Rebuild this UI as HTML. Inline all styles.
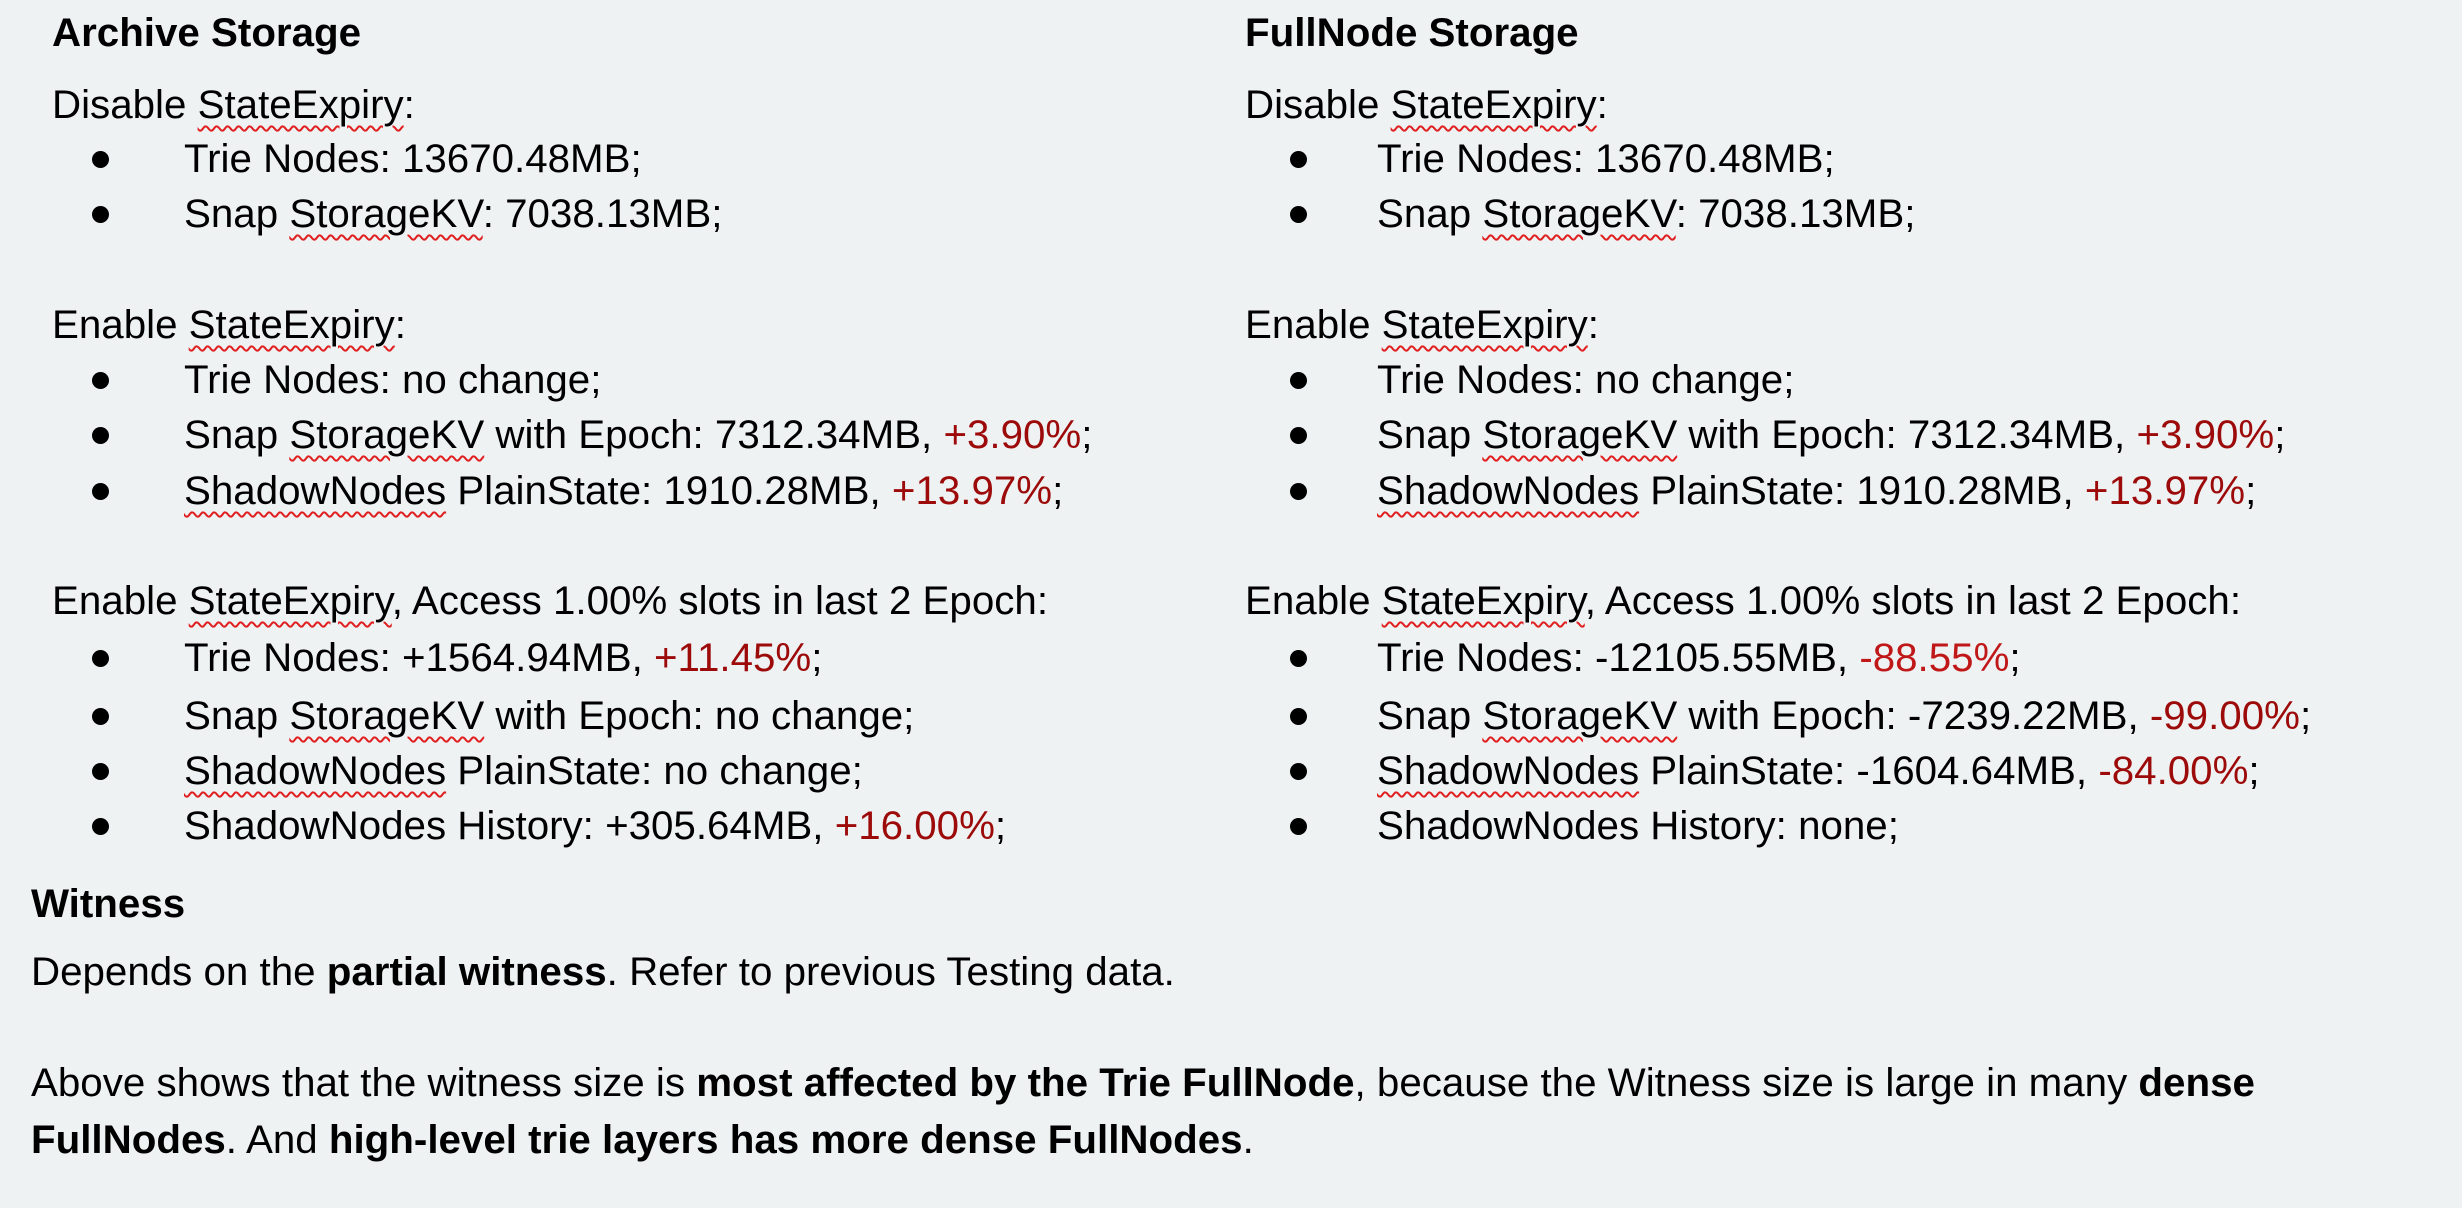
<!DOCTYPE html>
<html><head><meta charset="utf-8"><style>
html,body{margin:0;padding:0}
body{width:2462px;height:1208px;overflow:hidden;position:relative;background:#eff2f3;font-family:"Liberation Sans",Arial,sans-serif;color:#000;font-size:40.3px}
.t{position:absolute;white-space:nowrap;line-height:40px}
.b{font-weight:bold}
.r{color:#9c0a0a}
.s{text-decoration:underline wavy #e02020;text-decoration-thickness:1.5px;text-underline-offset:7px}
.d{position:absolute;width:17px;height:17px;border-radius:50%;background:#000}
</style></head><body>
<div class="t b" style="left:52px;top:13px">Archive Storage</div>
<div class="t" style="left:52px;top:85px">Disable <span class="s">StateExpiry</span>:</div>
<div class="d" style="left:92px;top:151px"></div><div class="t" style="left:184px;top:139px">Trie Nodes: 13670.48MB;</div>
<div class="d" style="left:92px;top:206px"></div><div class="t" style="left:184px;top:194px">Snap <span class="s">StorageKV</span>: 7038.13MB;</div>
<div class="t" style="left:52px;top:305px">Enable <span class="s">StateExpiry</span>:</div>
<div class="d" style="left:92px;top:372px"></div><div class="t" style="left:184px;top:360px">Trie Nodes: no change;</div>
<div class="d" style="left:92px;top:427px"></div><div class="t" style="left:184px;top:415px">Snap <span class="s">StorageKV</span> with Epoch: 7312.34MB, <span class="r">+3.90%</span>;</div>
<div class="d" style="left:92px;top:483px"></div><div class="t" style="left:184px;top:471px"><span class="s">ShadowNodes</span> PlainState: 1910.28MB, <span class="r">+13.97%</span>;</div>
<div class="t" style="left:52px;top:581px">Enable <span class="s">StateExpiry</span>, Access 1.00% slots in last 2 Epoch:</div>
<div class="d" style="left:92px;top:650px"></div><div class="t" style="left:184px;top:638px">Trie Nodes: +1564.94MB, <span class="r">+11.45%</span>;</div>
<div class="d" style="left:92px;top:708px"></div><div class="t" style="left:184px;top:696px">Snap <span class="s">StorageKV</span> with Epoch: no change;</div>
<div class="d" style="left:92px;top:763px"></div><div class="t" style="left:184px;top:751px"><span class="s">ShadowNodes</span> PlainState: no change;</div>
<div class="d" style="left:92px;top:818px"></div><div class="t" style="left:184px;top:806px">ShadowNodes History: +305.64MB, <span class="r">+16.00%</span>;</div>

<div class="t b" style="left:1245px;top:13px">FullNode Storage</div>
<div class="t" style="left:1245px;top:85px">Disable <span class="s">StateExpiry</span>:</div>
<div class="d" style="left:1290px;top:151px"></div><div class="t" style="left:1377px;top:139px">Trie Nodes: 13670.48MB;</div>
<div class="d" style="left:1290px;top:206px"></div><div class="t" style="left:1377px;top:194px">Snap <span class="s">StorageKV</span>: 7038.13MB;</div>
<div class="t" style="left:1245px;top:305px">Enable <span class="s">StateExpiry</span>:</div>
<div class="d" style="left:1290px;top:372px"></div><div class="t" style="left:1377px;top:360px">Trie Nodes: no change;</div>
<div class="d" style="left:1290px;top:427px"></div><div class="t" style="left:1377px;top:415px">Snap <span class="s">StorageKV</span> with Epoch: 7312.34MB, <span class="r">+3.90%</span>;</div>
<div class="d" style="left:1290px;top:483px"></div><div class="t" style="left:1377px;top:471px"><span class="s">ShadowNodes</span> PlainState: 1910.28MB, <span class="r">+13.97%</span>;</div>
<div class="t" style="left:1245px;top:581px">Enable <span class="s">StateExpiry</span>, Access 1.00% slots in last 2 Epoch:</div>
<div class="d" style="left:1290px;top:650px"></div><div class="t" style="left:1377px;top:638px">Trie Nodes: -12105.55MB, <span class="r" style="color:#c01818">-88.55%</span>;</div>
<div class="d" style="left:1290px;top:708px"></div><div class="t" style="left:1377px;top:696px">Snap <span class="s">StorageKV</span> with Epoch: -7239.22MB, <span class="r">-99.00%</span>;</div>
<div class="d" style="left:1290px;top:763px"></div><div class="t" style="left:1377px;top:751px"><span class="s">ShadowNodes</span> PlainState: -1604.64MB, <span class="r">-84.00%</span>;</div>
<div class="d" style="left:1290px;top:818px"></div><div class="t" style="left:1377px;top:806px">ShadowNodes History: none;</div>

<div class="t b" style="left:31px;top:884px">Witness</div>
<div class="t" style="left:31px;top:952px">Depends on the <b>partial witness</b>. Refer to previous Testing data.</div>
<div class="t" style="left:31px;top:1063px">Above shows that the witness size is <b>most affected by the Trie FullNode</b>, because the Witness size is large in many <b>dense</b></div>
<div class="t" style="left:31px;top:1120px"><b>FullNodes</b>. And <b>high-level trie layers has more dense FullNodes</b>.</div>
</body></html>
